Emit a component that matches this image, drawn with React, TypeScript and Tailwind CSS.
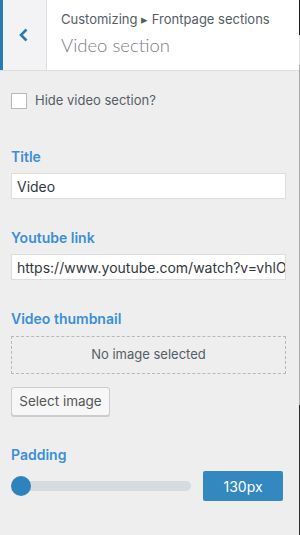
import React from "react";

const labelCls = "block text-[14px] leading-[20px] font-semibold text-[#3b8fd6] mb-[6px]";

export default function App() {
  return (
    <div className="w-[300px] h-[535px] flex bg-[#eeeeee] overflow-hidden font-['Inter','Liberation_Sans',sans-serif]">
      <div className="flex-1 flex flex-col min-w-0">
        {/* Header */}
        <div className="h-[71px] flex bg-white border-b border-[#dddddd]">
          <div className="w-[47px] flex items-center justify-center bg-[#f3f3f5] border-l-[3px] border-[#2a7ab8] border-r border-r-[#dddddd]">
            <svg width="12" height="14" viewBox="0 0 12 14" className="ml-[-2px]">
              <polyline points="8.5,1.5 3,7 8.5,12.5" fill="none" stroke="#2a7ab8" strokeWidth="2.6" strokeLinecap="butt" strokeLinejoin="miter" />
            </svg>
          </div>
          <div className="flex-1 pl-[14px] pt-[10px]">
            <div className="text-[13px] leading-[18px] text-[#555d66]">Customizing ▸ Frontpage sections</div>
            <div className="text-[18.5px] leading-[28px] font-light text-[#7b8086] mt-[3px] font-['Lato','Inter',sans-serif]">Video section</div>
          </div>
        </div>

        {/* Body */}
        <div className="px-[11px] pt-[22px]">
          <label className="flex items-center gap-[8px] h-[16px]">
            <span className="w-[16px] h-[16px] bg-white border border-[#b4b9be] shrink-0" />
            <span className="text-[13px] text-[#555d66]">Hide video section?</span>
          </label>

          <div className="mt-[38px]">
            <span className={labelCls}>Title</span>
            <div className="h-[26px] w-[275px] bg-white border border-[#dddddd] flex items-center pl-[5px] text-[14px] text-[#32373c] overflow-hidden whitespace-nowrap">
              Video
            </div>
          </div>

          <div className="mt-[29px]">
            <span className={labelCls}>Youtube link</span>
            <div className="h-[26px] w-[275px] bg-white border border-[#dddddd] flex items-center pl-[5px] text-[14px] text-[#32373c] overflow-hidden whitespace-nowrap">
              https://www.youtube.com/watch?v=vhlOr
            </div>
          </div>

          <div className="mt-[29px]">
            <span className={labelCls + " !mb-[7px]"}>Video thumbnail</span>
            <div className="h-[38px] w-[275px] border border-dashed border-[#b4b9be] flex items-center justify-center text-[13px] text-[#555d66]">
              No image selected
            </div>
            <button className="mt-[13px] h-[29px] w-[99px] bg-[#f7f7f7] border border-[#cccccc] rounded-[3px] shadow-[0_1px_0_#cccccc] text-[13.5px] text-[#555555] flex items-center justify-center">
              Select image
            </button>
          </div>

          <div className="mt-[29px]">
            <span className={labelCls}>Padding</span>
            <div className="flex items-center h-[30px]">
              <div className="relative w-[180px] h-[10px] rounded-full bg-[#d5dbdf]">
                <div className="absolute left-0 top-[-5px] w-[20px] h-[20px] rounded-full bg-[#2e83be]" />
              </div>
              <div className="ml-[12px] w-[80px] h-[30px] rounded-[2px] bg-[#3388c0] text-white text-[14px] flex items-center justify-center">
                130px
              </div>
            </div>
          </div>
        </div>
      </div>
      <div className="w-[1px] flex flex-col">
        <div className="h-[35px] bg-[#1e1e1e]" />
        <div className="h-[30px] bg-[#e5e5e5]" />
        <div className="h-[340px] bg-[#a9a9a9]" />
        <div className="flex-1 bg-[#2a2a2a]" />
      </div>
    </div>
  );
}
